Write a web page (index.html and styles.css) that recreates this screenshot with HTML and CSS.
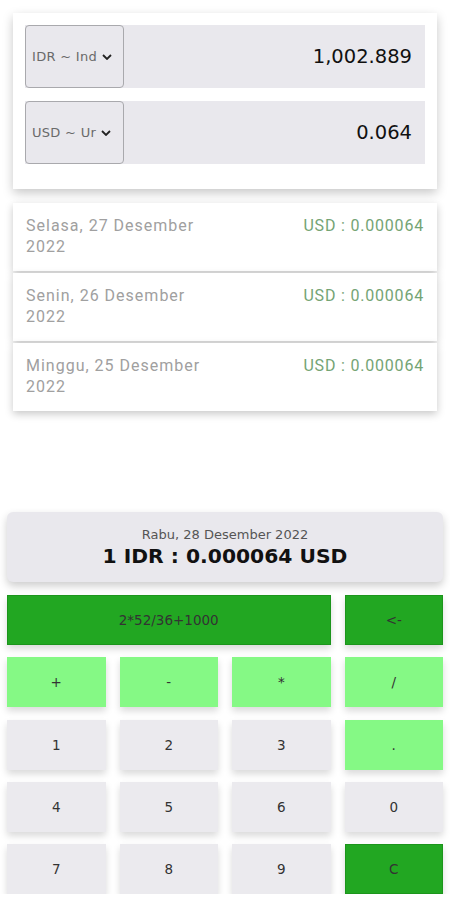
FILE: index.html
```html
<!DOCTYPE html>
<html>
<head>
    <title>Kurs</title>
    <link rel="stylesheet" href="styles.css">
    <meta charset="UTF-8">
</head>
<body>
    <div class="konversi">
        <div class="baris">
            <div class="pilih">IDR ~ Ind <svg class="panah" viewBox="0 0 10 6"><path d="M1 1 L5 5 L9 1" /></svg></div>
            <div class="nilai">1,002.889</div>
        </div>
        <div class="baris">
            <div class="pilih">USD ~ Ur <svg class="panah" viewBox="0 0 10 6"><path d="M1 1 L5 5 L9 1" /></svg></div>
            <div class="nilai">0.064</div>
        </div>
    </div>

    <div class="riwayat">
        <div class="item">
            <div class="tanggal">Selasa, 27 Desember 2022</div>
            <div class="kurs">USD : 0.000064</div>
        </div>
        <div class="item">
            <div class="tanggal">Senin, 26 Desember 2022</div>
            <div class="kurs">USD : 0.000064</div>
        </div>
        <div class="item">
            <div class="tanggal">Minggu, 25 Desember 2022</div>
            <div class="kurs">USD : 0.000064</div>
        </div>
    </div>

    <div class="kalkulator">
        <div class="info">
            <div class="hari">Rabu, 28 Desember 2022</div>
            <div class="rate">1 IDR : 0.000064 USD</div>
        </div>
        <div class="tombol-grid">
            <button class="tombol gelap layar">2*52/36+1000</button>
            <button class="tombol gelap">&lt;-</button>
            <button class="tombol terang">+</button>
            <button class="tombol terang">-</button>
            <button class="tombol terang">*</button>
            <button class="tombol terang">/</button>
            <button class="tombol">1</button>
            <button class="tombol">2</button>
            <button class="tombol">3</button>
            <button class="tombol terang">.</button>
            <button class="tombol">4</button>
            <button class="tombol">5</button>
            <button class="tombol">6</button>
            <button class="tombol">0</button>
            <button class="tombol">7</button>
            <button class="tombol">8</button>
            <button class="tombol">9</button>
            <button class="tombol gelap">C</button>
        </div>
    </div>
</body>
</html>
```

FILE: styles.css
```css
body {
    margin: 0;
    background-color: #fff;
    font-family: 'DejaVu Sans', sans-serif;
}
.konversi {
    margin: 13px 13px 0 13px;
    padding: 12px 12px 25px 12px;
    background-color: #fff;
    box-shadow: 0 4px 10px rgba(0, 0, 0, 0.22);
    display: flex;
    flex-direction: column;
    gap: 13px;
}
.baris {
    display: flex;
    height: 63px;
    background-color: #e9e8ed;
}
.pilih {
    width: 99px;
    box-sizing: border-box;
    border: 1px solid #a9a9ad;
    border-radius: 4px;
    display: flex;
    align-items: center;
    padding-left: 6px;
    font-size: 13px;
    letter-spacing: 0.3px;
    color: #6a6a6a;
    white-space: nowrap;
}
.panah {
    width: 10px;
    height: 6px;
    margin-left: 5px;
    fill: none;
    stroke: #222;
    stroke-width: 1.8;
}
.nilai {
    flex: 1;
    display: flex;
    align-items: center;
    justify-content: flex-end;
    padding-right: 13px;
    font-size: 19.5px;
    color: #111;
}
.riwayat {
    margin: 14px 13px 0 13px;
    display: flex;
    flex-direction: column;
    gap: 2px;
    font-family: Roboto, sans-serif;
}
.item {
    display: flex;
    justify-content: space-between;
    height: 68px;
    box-sizing: border-box;
    padding: 12px 13px 0 13px;
    background-color: #fff;
    box-shadow: 0 3px 8px rgba(0, 0, 0, 0.22);
    font-size: 16px;
    line-height: 21px;
    letter-spacing: 1px;
}
.tanggal {
    width: 50%;
    color: #a0a0a0;
}
.kurs {
    color: #74a474;
    letter-spacing: 0.8px;
}
.kalkulator {
    margin-top: 101px;
    padding: 0 7px;
}
.info {
    height: 70px;
    background-color: #e9e8ed;
    border-radius: 6px;
    box-shadow: 0 4px 8px rgba(0, 0, 0, 0.2);
    display: flex;
    flex-direction: column;
    align-items: center;
    justify-content: center;
}
.hari {
    font-size: 13px;
    color: #555;
    line-height: 17px;
}
.rate {
    font-size: 20.3px;
    font-weight: bold;
    color: #111;
    line-height: 26px;
}
.tombol-grid {
    margin-top: 13px;
    display: grid;
    grid-template-columns: repeat(4, 1fr);
    column-gap: 14px;
    row-gap: 12.3px;
}
.tombol {
    height: 50px;
    border: none;
    background-color: #ebeaee;
    box-shadow: 0 4px 7px rgba(0, 0, 0, 0.15);
    font-family: 'DejaVu Sans', sans-serif;
    font-size: 13.5px;
    color: #333;
}
.tombol.terang {
    background-color: #85f985;
}
.tombol.gelap {
    background-color: #22a722;
    border: 1px solid #1c951c;
}
.tombol.layar {
    grid-column: span 3;
}
```
